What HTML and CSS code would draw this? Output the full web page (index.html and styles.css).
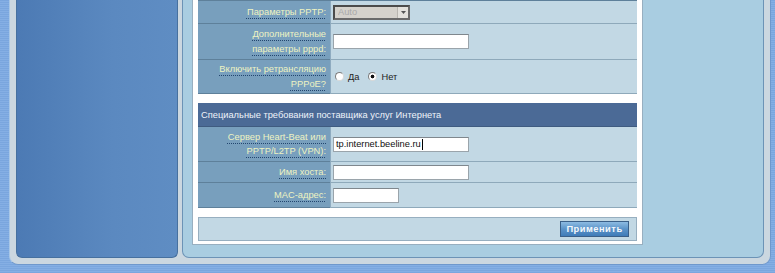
FILE: index.html
```html
<!DOCTYPE html>
<html lang="ru">
<head>
<meta charset="utf-8">
<title>WAN</title>
<link rel="stylesheet" href="styles.css">
</head>
<body>
<div class="page">
  <div class="frame">
    <aside class="sidebar"></aside>
    <main class="main">
      <div class="content">
        <section class="section sec-top">
          <div class="row r1">
            <div class="label"><span>Параметры PPTP:</span></div>
            <div class="value">
              <span class="select-wrap">
                <select class="select" disabled><option>Auto</option></select>
                <span class="arrow"><svg width="5" height="3" viewBox="0 0 5 3"><path d="M0 0H5L2.5 3Z" fill="#555"/></svg></span>
              </span>
            </div>
          </div>
          <div class="row r2">
            <div class="label"><span>Дополнительные параметры pppd:</span></div>
            <div class="value"><input class="field wide" type="text"></div>
          </div>
          <div class="row r3">
            <div class="label"><span>Включить ретрансляцию PPPoE?</span></div>
            <div class="value radios">
              <label class="radio"><input type="radio" name="relay"> Да</label>
              <label class="radio"><input type="radio" name="relay" checked> Нет</label>
            </div>
          </div>
        </section>

        <section class="section sec-isp">
          <div class="head">Специальные требования поставщика услуг Интернета</div>
          <div class="row r4">
            <div class="label"><span>Сервер Heart-Beat или PPTP/L2TP (VPN):</span></div>
            <div class="value"><span class="field-wrap"><input class="field wide" type="text" value="tp.internet.beeline.ru"><span class="caret"></span></span></div>
          </div>
          <div class="row r5">
            <div class="label"><span>Имя хоста:</span></div>
            <div class="value"><input class="field wide" type="text"></div>
          </div>
          <div class="row r6">
            <div class="label"><span>MAC-адрес:</span></div>
            <div class="value"><input class="field short" type="text"></div>
          </div>
        </section>

        <div class="apply-row">
          <button class="apply" type="button">Применить</button>
        </div>
      </div>
    </main>
  </div>
</div>
</body>
</html>
```
FILE: styles.css
```css
* { box-sizing: border-box; }

html, body {
  margin: 0;
  padding: 0;
}

body {
  font-family: "Liberation Sans", Arial, sans-serif;
  font-size: 9.3px;
}

.page {
  width: 775px;
  height: 273px;
  overflow: hidden;
  background: repeating-linear-gradient(to bottom, #7aa6de 0 1px, #85afe4 1px 2px);
}

.frame {
  margin-left: 9px;
  width: 762px;
  height: 265px;
  display: flex;
  gap: 4px;
  padding: 0 6px 6px 6px;
  background: #cbd7e0;
  border: 1px solid #6f98cc;
  border-top: none;
  border-left-color: #a9c7e6;
  border-radius: 0 0 9px 9px;
}

.sidebar {
  width: 162px;
  flex: none;
  background: linear-gradient(to right, #4c7ab4, #5b89c0 60%, #5f8dc3);
  border: 1px solid #46709f;
  border-top: none;
  border-radius: 0 0 6px 6px;
}

.main {
  flex: 1;
  background: #a9cde1;
  border: 1px solid #6c93b6;
  border-top: none;
  border-radius: 0 0 7px 7px;
  padding: 0 0 0 9px;
}

.content {
  width: 451px;
  background: #fff;
  border: 1px solid #98afc0;
  border-top: none;
  padding: 0 5px 3px 5px;
}

.section {
  border-top: 1px solid #5e809a;
}

.sec-isp {
  margin-top: 9px;
  border-top: none;
}

.row {
  display: grid;
  grid-template-columns: 132px 1fr;
}

.r1 { height: 23px; }
.r2 { height: 36px; }
.r3 { height: 34px; }
.r4 { height: 35px; }
.r5 { height: 21px; }
.r6 { height: 25px; }

.label {
  background: #789fbd;
  border-bottom: 1px solid #5e809a;
  display: flex;
  align-items: center;
  justify-content: flex-end;
  text-align: right;
  padding: 0 4px 0 10px;
  line-height: 14.5px;
  color: #eef3c2;
}

.label span {
  text-decoration: underline dotted #23466f;
  text-underline-offset: 3px;
  text-decoration-thickness: 1px;
}

.value {
  background: #c2d8e4;
  border-bottom: 1px solid #8ea9ba;
  border-left: 1px solid #8eabc0;
  display: flex;
  align-items: center;
  padding-left: 2px;
}

.head {
  height: 24px;
  background: #4b6a96;
  border-bottom: 1px solid #3f5b80;
  color: #eef3fa;
  display: flex;
  align-items: center;
  padding-left: 3px;
}

.field {
  height: 15px;
  border: 1px solid #9aa4ab;
  border-top-color: #7f878d;
  background: #fff;
  font: inherit;
  color: #111;
  padding: 0 2px;
  margin: 0;
  outline: none;
}

.field-wrap {
  position: relative;
  display: inline-block;
  height: 15px;
}

.caret {
  position: absolute;
  left: 89px;
  top: 2px;
  width: 1px;
  height: 11px;
  background: #000;
}

.wide { width: 136px; }
.short { width: 66px; }

.select-wrap {
  position: relative;
  display: inline-block;
  width: 77px;
  height: 15px;
}

.select {
  appearance: none;
  -webkit-appearance: none;
  width: 77px;
  height: 15px;
  margin: 0;
  border: 2px solid #4b4b4b;
  border-right-color: #6a6a6a;
  border-bottom-color: #6a6a6a;
  background: #d5d2cc;
  color: #a9a9a9;
  font: inherit;
  padding: 0 3px;
  opacity: 1;
}

.arrow {
  position: absolute;
  right: 2px;
  top: 2px;
  width: 11px;
  height: 11px;
  background: #e3e1dc;
  border-left: 1px solid #b9b6b0;
  display: flex;
  align-items: center;
  justify-content: center;
}

.radios {
  gap: 9px;
  padding-left: 4px;
  color: #222;
}

.radio {
  display: flex;
  align-items: center;
  gap: 4px;
}

.radio input {
  appearance: none;
  -webkit-appearance: none;
  width: 9px;
  height: 9px;
  margin: 0;
  border-radius: 50%;
  border: 1px solid #7d7d7d;
  border-right-color: #d8d8d8;
  border-bottom-color: #d8d8d8;
  background: #fff;
}

.radio input:checked {
  background: radial-gradient(circle, #111 0 1.6px, #fff 2.2px);
}

.apply-row {
  margin-top: 9px;
  height: 24px;
  background: #c2d8e4;
  border: 1px solid #97afc0;
  display: flex;
  align-items: center;
  justify-content: flex-end;
  padding-right: 7px;
}

.apply {
  width: 69px;
  height: 16px;
  margin: 0;
  padding: 0;
  border: 1px solid #3a5f88;
  background: linear-gradient(to bottom, #8dbbe2, #5b93c8 50%, #3f7bb8);
  color: #f4f8fc;
  font: inherit;
  font-weight: bold;
  letter-spacing: 0.5px;
}
```
